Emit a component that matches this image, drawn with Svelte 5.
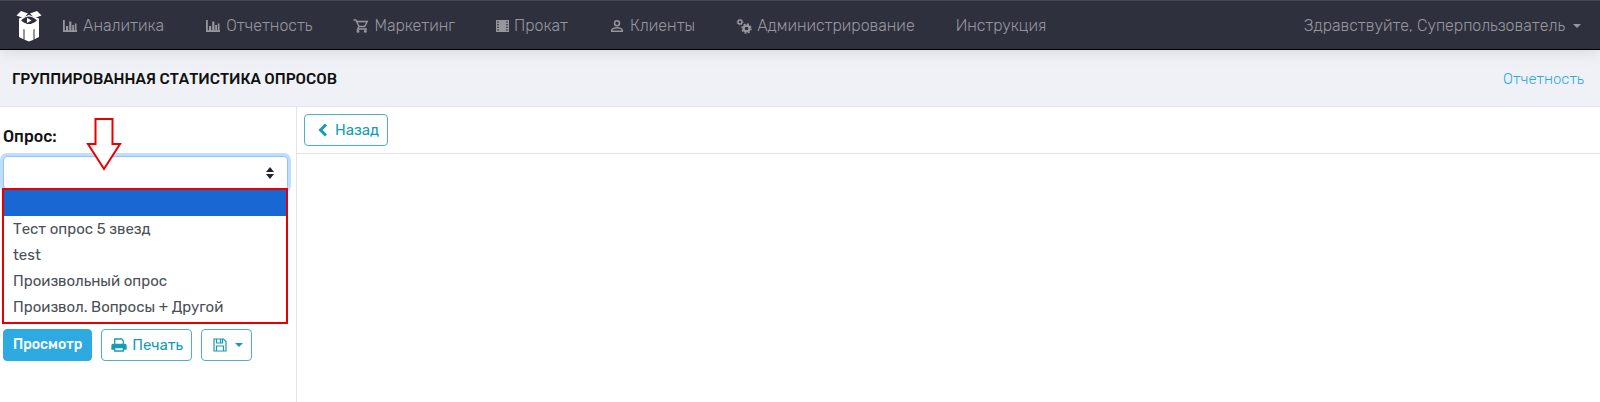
<script>
  const menu = [
    { icon: 'chart', label: 'Аналитика' },
    { icon: 'chart', label: 'Отчетность' },
    { icon: 'cart', label: 'Маркетинг' },
    { icon: 'film', label: 'Прокат' },
    { icon: 'user', label: 'Клиенты' },
    { icon: 'gears', label: 'Администрирование' },
    { icon: null, label: 'Инструкция' }
  ];

  const surveys = ['', 'Тест опрос 5 звезд', 'test', 'Произвольный опрос', 'Произвол. Вопросы + Другой'];

  let selected = $state('');
  let open = $state(true);

  function choose(survey) {
    selected = survey;
    open = false;
  }

  function toggle(event) {
    event.preventDefault();
    open = !open;
  }
</script>

<nav class="navbar">
  <a class="brand" href="#home" aria-label="На главную">
    <svg width="26" height="32" viewBox="0 0 26 32">
      <g fill="#fff">
        <path d="M5 1 L12 3.500 L7.500 8 L0.500 5.500 Z" />
        <path d="M21 1 L14 3.500 L18.500 8 L25.500 5.500 Z" />
        <path d="M3 8.500 L13 5 L23 8.500 V27 L18.500 29.200 V19 L17.500 19.500 V29.800 L13 31.500 L8.500 29.800 V19.500 L7.500 19 V29.200 L3 27 Z" />
      </g>
      <path d="M5 10.500 Q13 2.500 21 10.500 Q13 18 5 10.500 Z" fill="#2f303e" />
      <path d="M5 10.500 Q13 18 21 10.500 V12 L13 16.500 L5 12 Z" fill="#fff" />
      <path d="M7.500 11 Q13 16 18.500 11 Q13 7 7.500 11 Z" fill="#2f303e" />
      <path d="M11 7.800 L15.500 10.500 L11 13 Z" fill="#fff" />
    </svg>
  </a>

  <ul class="menu">
    {#each menu as item}
      <li>
        <a href="#menu">
          {#if item.icon === 'chart'}
            <svg class="icon" viewBox="0 0 16 16" fill="currentColor">
              <path d="M1 2h1.800v10.200H15V14H1zM4 8h2.200v5H4zM7.200 3.500h2.200V13H7.200zM10.200 7h1.800v6h-1.800zM12.800 5.500H14.500V13h-1.700z" />
            </svg>
          {:else if item.icon === 'cart'}
            <svg class="icon" viewBox="0 0 16 16" fill="none" stroke="currentColor" stroke-width="1.400">
              <path d="M0.500 2h2.300l3.200 6.500-1.500 2.500h9.500M3.500 3.500h10.700L11.700 8.500H6" />
              <circle cx="5" cy="13.300" r="0.800" />
              <circle cx="12.300" cy="13.300" r="0.800" />
            </svg>
          {:else if item.icon === 'film'}
            <svg class="icon narrow" viewBox="0 0 13 16" fill="currentColor">
              <path d="M3 2h7v12H3z" />
              <path d="M0 2h3v1.500H0zM0 4.600h3v1.600H0zM0 7.200h3v1.600H0zM0 9.800h3v1.600H0zM0 12.400h3V14H0zM10 2h3v1.500h-3zM10 4.600h3v1.600h-3zM10 7.200h3v1.600h-3zM10 9.800h3v1.600h-3zM10 12.400h3V14h-3z" />
              <path d="M0 2h1v12H0zM12 2h1v12h-1z" />
            </svg>
          {:else if item.icon === 'user'}
            <svg class="icon" viewBox="0 0 16 16" fill="none" stroke="currentColor" stroke-width="1.500">
              <circle cx="8" cy="5.200" r="2.500" />
              <path d="M2.700 13.300v-1c0-1.700 3.500-2.500 5.300-2.500s5.300 0.800 5.300 2.500v1z" />
            </svg>
          {:else if item.icon === 'gears'}
            <svg class="icon" viewBox="0 0 16 16" fill="none" stroke="currentColor">
              <circle cx="4" cy="4" r="1.900" stroke-width="1.400" />
              <circle cx="4" cy="4" r="2.800" stroke-width="1" stroke-dasharray="1.200 1" />
              <circle cx="10.500" cy="10.500" r="2.900" stroke-width="2.200" />
              <circle cx="10.500" cy="10.500" r="4.500" stroke-width="1.400" stroke-dasharray="1.900 1.630" />
            </svg>
          {/if}
          {item.label}
        </a>
      </li>
    {/each}
  </ul>

  <button class="account" type="button">
    Здравствуйте, Суперпользователь
    <span class="caret"></span>
  </button>
</nav>

<header class="subheader">
  <h1>Группированная статистика опросов</h1>
  <a href="#reports">Отчетность</a>
</header>

<main class="content">
  <aside class="sidebar">
    <div class="field">
      <label for="survey">Опрос:</label>
      <div class="select-wrap">
        <select id="survey" bind:value={selected} onmousedown={toggle}>
          {#each surveys as survey}
            <option value={survey}>{survey}</option>
          {/each}
        </select>
        <svg class="sort" width="8" height="12" viewBox="0 0 8 12" fill="#212529" aria-hidden="true">
          <path d="M4 0 L8 5 H0 Z M4 12 L0 7 H8 Z" />
        </svg>
        {#if open}
          <ul class="options" role="listbox" aria-label="Опрос">
            {#each surveys as survey}
              <li role="option" aria-selected={survey === selected}>
                <button type="button" class:active={survey === selected} aria-label={survey || 'Не выбрано'} onclick={() => choose(survey)}>
                  {survey}
                </button>
              </li>
            {/each}
          </ul>
        {/if}
      </div>
      <svg class="pointer" width="36" height="54" viewBox="0 0 36 54" aria-hidden="true">
        <path d="M9.500 2 H26.500 V27 H34 L18 52 L2 27 H9.500 Z" fill="#fff" stroke="#e60000" stroke-width="2" />
      </svg>
    </div>

    <div class="actions">
      <button class="btn primary" type="button">Просмотр</button>
      <button class="btn" type="button">
        <svg width="16" height="16" viewBox="0 0 16 16" fill="none" stroke="currentColor" stroke-width="1.300">
          <path d="M3.700 7V2h6.800l1.800 1.800V7" />
          <path d="M1 8.500q0-1 1-1h12q1 0 1 1V12H1z" fill="currentColor" />
          <path d="M3.700 10.500h8.600V14H3.700z" fill="#fff" />
        </svg>
        Печать
      </button>
      <button class="btn save" type="button" aria-label="Сохранить">
        <svg width="14" height="14" viewBox="0 0 14 14" fill="none" stroke="currentColor" stroke-width="1.200">
          <path d="M1 1h9.500L13 3.500V13H1zM3.500 1v4h6V1M7.500 1.500v3M3.500 13V8h7v5" />
        </svg>
        <span class="caret"></span>
      </button>
    </div>
  </aside>

  <section class="report">
    <div class="toolbar">
      <button class="btn back" type="button">
        <svg width="14" height="14" viewBox="0 0 14 14" fill="none" stroke="currentColor" stroke-width="3">
          <path d="M10 1.500L4.500 7l5.500 5.500" />
        </svg>
        Назад
      </button>
    </div>
  </section>
</main>

<style>
  :global(body) {
    background: #fff;
    color: #111;
    font-family: Rubik, Roboto, 'Noto Sans', sans-serif;
    font-size: 15px;
    line-height: 24px;
  }

  :global(#app) {
    display: flex;
    flex-direction: column;
    min-height: 100vh;
  }

  * {
    box-sizing: border-box;
  }

  a {
    text-decoration: none;
  }

  button,
  select {
    font: inherit;
  }

  .navbar {
    position: relative;
    display: flex;
    align-items: center;
    height: 50px;
    padding: 2px 16px 0;
    background: #2f303e;
    border-top: 1px solid #46474f;
    border-bottom: 1px solid #000;
    box-shadow: 0 2px 16px rgba(0, 0, 0, 0.1);
    font-size: 16px;
    font-weight: 300;
  }

  .brand {
    display: flex;
    margin-right: 20px;
  }

  .menu {
    display: flex;
    gap: 41px;
    margin: 0;
    padding: 0;
    list-style: none;
  }

  .menu a {
    display: flex;
    align-items: center;
    gap: 5px;
    color: #96979e;
    white-space: nowrap;
  }

  .icon {
    width: 16px;
    height: 16px;
  }

  .icon.narrow {
    width: 13px;
  }

  .account {
    display: flex;
    align-items: center;
    gap: 8px;
    margin-left: auto;
    padding: 0 3px;
    border: 0;
    background: none;
    color: #96979e;
    white-space: nowrap;
  }

  .caret {
    border: 4px solid transparent;
    border-top-color: currentColor;
    border-bottom: 0;
  }

  .subheader {
    display: flex;
    align-items: center;
    justify-content: space-between;
    height: 57px;
    padding: 2px 16px 0 12px;
    background: #f0f1f7;
    border-bottom: 1px solid #e4e5ea;
  }

  h1 {
    margin: 0;
    font-size: 15px;
    font-weight: 500;
    text-transform: uppercase;
  }

  .subheader a {
    color: #2fa9e0;
    font-weight: 300;
  }

  .content {
    display: flex;
    flex: 1;
  }

  .sidebar {
    flex: none;
    width: 297px;
    padding: 18px 8px 16px 3px;
    border-right: 1px solid #e4e5ea;
  }

  .field {
    position: relative;
    min-height: 204px;
  }

  label {
    display: block;
    margin-bottom: 7px;
    font-size: 16px;
    font-weight: 500;
  }

  .select-wrap {
    position: relative;
  }

  select {
    display: block;
    width: 100%;
    height: 34px;
    padding: 0 32px 0 12px;
    appearance: none;
    background: #fff;
    border: 1px solid #8fc4fb;
    border-radius: 4px;
    outline: 0;
    box-shadow: 0 0 0 3px #bfdeff;
  }

  .sort {
    position: absolute;
    top: 11px;
    right: 14px;
    pointer-events: none;
  }

  .options {
    position: absolute;
    z-index: 1;
    top: 32px;
    left: -1px;
    right: 0;
    margin: 0;
    padding: 0 0 2px;
    background: #fff;
    border: 2px solid #e60000;
    list-style: none;
  }

  .options button {
    display: block;
    width: 100%;
    height: 26px;
    padding: 0 9px;
    border: 0;
    background: none;
    color: #495057;
    line-height: 26px;
    text-align: left;
  }

  .options button.active {
    background: #1967d2;
  }

  .pointer {
    position: absolute;
    z-index: 2;
    top: -8px;
    left: 83px;
    pointer-events: none;
  }

  .actions {
    display: flex;
    gap: 9px;
  }

  .btn {
    display: flex;
    align-items: center;
    gap: 5px;
    height: 32px;
    padding: 0 8px 0 9px;
    background: #fff;
    border: 1px solid #4bb3c5;
    border-radius: 4px;
    color: #159cb4;
    line-height: 24px;
  }

  .btn.primary {
    padding: 0 9px;
    background: #2caae1;
    border-color: #2caae1;
    color: #fff;
    font-size: 14px;
    font-weight: 500;
  }

  .btn.save {
    gap: 8px;
  }

  .btn.save,
  .btn.back {
    padding: 0 8px 0 11px;
  }

  .report {
    flex: 1;
  }

  .toolbar {
    display: flex;
    padding: 7px;
    border-bottom: 1px solid #e4e5ea;
  }
</style>
